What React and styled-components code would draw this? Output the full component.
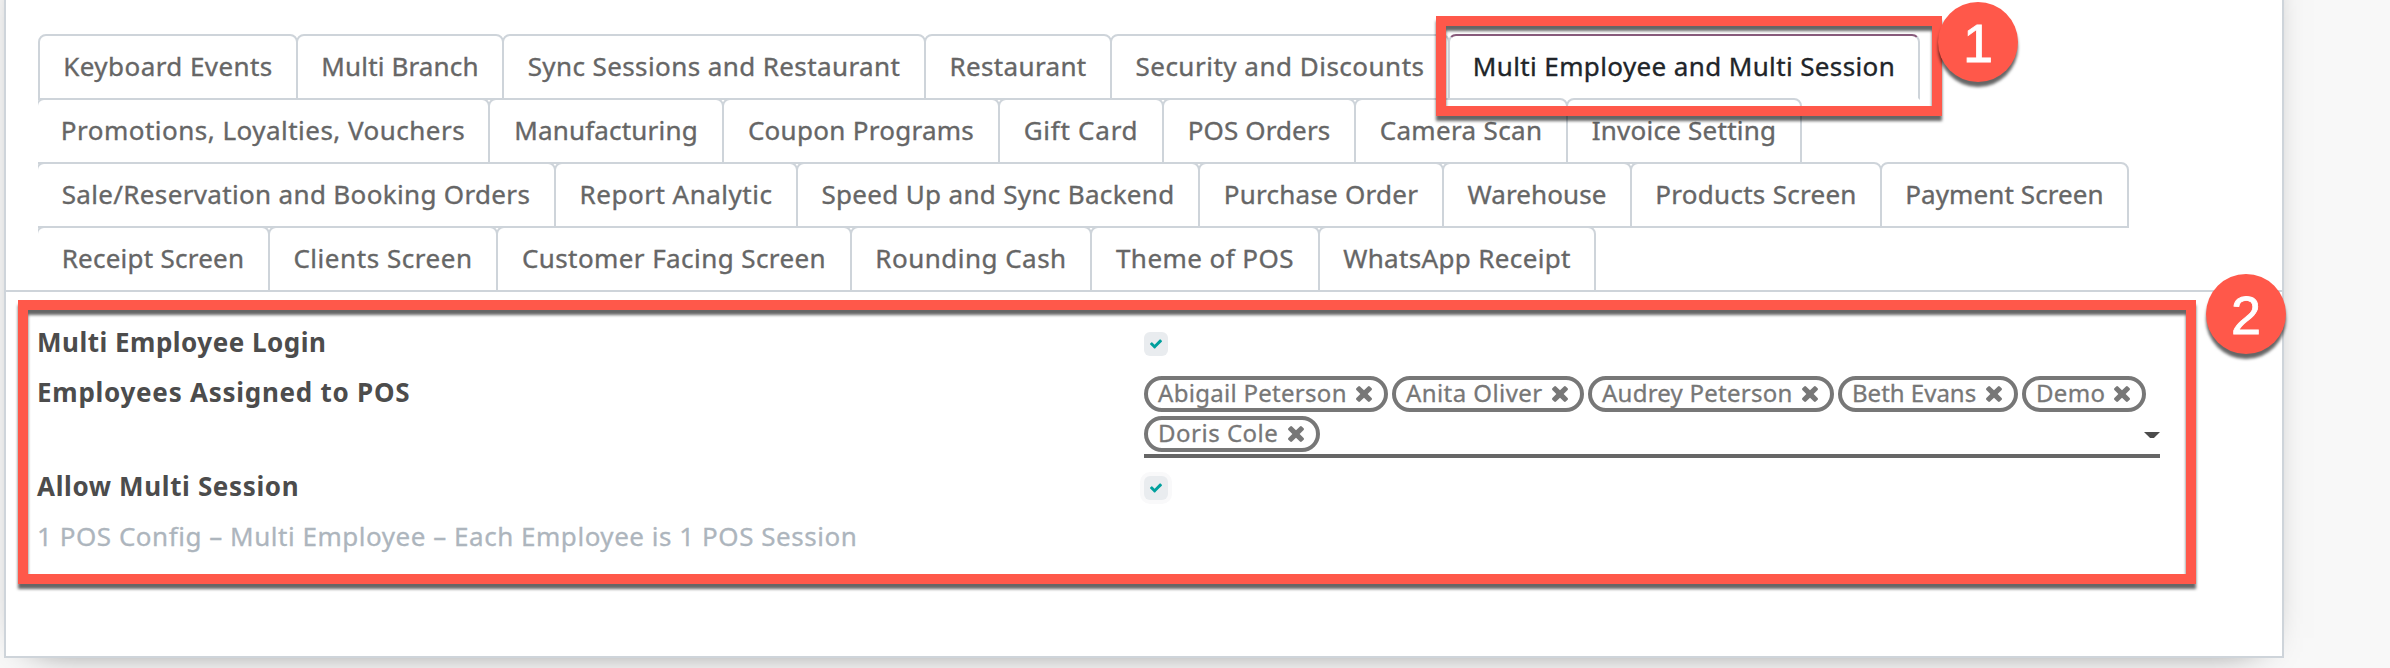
import React from "react";
import styled, { createGlobalStyle } from "styled-components";

const line = "#ced4da";
const accent = "#ff584a";

const GlobalStyle = createGlobalStyle`
  *, *::before, *::after { box-sizing: border-box; }
  body {
    margin: 0;
    background: #f8f8f8;
    font-family: "Noto Sans", "Open Sans", sans-serif;
    font-size: 26px;
    color: #4c4c4c;
  }
`;

const Page = styled.div`
  position: relative;
  height: 668px;
  overflow: hidden;
`;

const Sheet = styled.main`
  width: 2280px;
  height: 718px;
  margin: -60px 0 0 4px;
  padding-top: 94px;
  background: #fff;
  border: 2px solid ${line};
  box-shadow: 0 10px 40px -30px #000;
`;

const TabStrip = styled.nav`
  padding-left: 32px;
  margin-top: -2px;
  border-bottom: 2px solid ${line};
`;

const TabRow = styled.div`
  display: flex;
  height: 64px;
  overflow-x: clip;
  overflow-y: visible;
`;

const Tab = styled.a`
  flex: none;
  width: ${(p) => p.$width}px;
  height: 66px;
  margin-left: ${(p) => (p.$flush ? 0 : -2)}px;
  border: 2px solid ${line};
  border-radius: 8px 8px 0 0;
  border-top-color: ${(p) => (p.$active ? "#875a7b" : line)};
  border-bottom-color: ${(p) => (p.$active ? "#fff" : line)};
  color: ${(p) => (p.$active ? "#212529" : "#666")};
  -webkit-text-stroke: 0.35px currentColor;
  line-height: 60px;
  letter-spacing: ${(p) => p.$tracking}px;
  text-align: center;
  white-space: nowrap;
`;

const Form = styled.section`
  padding: 25px 0 0 31px;
`;

const FormRow = styled.div`
  display: grid;
  grid-template-columns: 1107px 1016px;
  align-items: start;
  min-height: ${(p) => (p.$tall ? 94 : 50)}px;
`;

const Label = styled.label`
  font-weight: 700;
  line-height: 50px;
  letter-spacing: ${(p) => p.$tracking}px;
  white-space: nowrap;
`;

const Help = styled.p`
  margin: 0;
  color: #adb5bd;
  -webkit-text-stroke: 0.3px currentColor;
  line-height: 50px;
  letter-spacing: 0.53px;
  white-space: nowrap;
`;

const CheckBox = styled.span`
  display: flex;
  align-items: center;
  justify-content: center;
  width: 24px;
  height: 24px;
  margin-top: 15px;
  border-radius: 6px;
  background: #e9ecef;
  color: #00a09d;
  box-shadow: ${(p) => (p.$focused ? "0 0 0 4px #f9f9fa" : "none")};
`;

const TagField = styled.div`
  display: flex;
  flex-wrap: wrap;
  gap: 4px;
  height: 82px;
  margin-top: 9px;
  border-bottom: 4px solid #666;
`;

const Tag = styled.span`
  display: flex;
  align-items: center;
  justify-content: space-between;
  width: ${(p) => p.$width}px;
  height: 36px;
  padding: 0 12px 0 10px;
  border: 4px solid #777;
  border-radius: 18px;
  color: #777;
`;

const TagText = styled.span`
  align-self: flex-start;
  height: 26px;
  font-size: 24px;
  line-height: 26px;
  -webkit-text-stroke: 0.3px currentColor;
  letter-spacing: ${(p) => p.$tracking}px;
  white-space: nowrap;
`;

const TagEntry = styled.span`
  display: flex;
  flex: 1;
  align-items: center;
  justify-content: flex-end;
  height: 38px;
`;

const Caret = styled.span`
  width: 16px;
  height: 6px;
  background: #4c4c4c;
  clip-path: polygon(0 0, 100% 0, 62% 100%, 38% 100%);
`;

const Highlight = styled.div`
  position: absolute;
  left: ${(p) => p.$x}px;
  top: ${(p) => p.$y}px;
  width: ${(p) => p.$w}px;
  height: ${(p) => p.$h}px;
  border: 10px solid ${accent};
  filter: drop-shadow(0 5px 1.5px rgba(0, 0, 0, 0.6));
`;

const StepBadge = styled.div`
  position: absolute;
  left: ${(p) => p.$x}px;
  top: ${(p) => p.$y}px;
  width: 80px;
  height: 80px;
  border-radius: 50%;
  background: ${accent};
  color: #fff;
  font: 54px/82px "Liberation Sans", Arial, sans-serif;
  -webkit-text-stroke: 0.8px currentColor;
  text-align: center;
  filter: drop-shadow(0 5px 1.5px rgba(0, 0, 0, 0.6));
`;

const CheckIcon = () => (
  <svg width="12" height="10" viewBox="121 318 1550 1220" fill="currentColor">
    <path d="M1671 566q0 40-28 68l-724 724-136 136q-28 28-68 28t-68-28l-136-136-362-362q-28-28-28-68t28-68l136-136q28-28 68-28t68 28l294 295 656-657q28-28 68-28t68 28l136 136q28 28 28 68z" />
  </svg>
);

const RemoveIcon = () => (
  <svg width="16" height="16" viewBox="302 366 1188 1188" fill="currentColor">
    <path d="M1490 1322q0 40-28 68l-136 136q-28 28-68 28t-68-28l-294-294-294 294q-28 28-68 28t-68-28l-136-136q-28-28-28-68t28-68l294-294-294-294q-28-28-28-68t28-68l136-136q28-28 68-28t68 28l294 294 294-294q28-28 68-28t68 28l136 136q28 28 28 68t-28 68l-294 294 294 294q28 28 28 68z" />
  </svg>
);

const tabRows = [
  [
    ["Keyboard Events", 260, 0.43],
    ["Multi Branch", 208, 0.15],
    ["Sync Sessions and Restaurant", 424, 0.4],
    ["Restaurant", 188, 0.35],
    ["Security and Discounts", 340, 0.5],
    ["Multi Employee and Multi Session", 472, 0.38],
  ],
  [
    ["Promotions, Loyalties, Vouchers", 454, 0.48],
    ["Manufacturing", 236, 0.18],
    ["Coupon Programs", 278, 0.28],
    ["Gift Card", 166, 0.75],
    ["POS Orders", 194, 0.12],
    ["Camera Scan", 214, 0.33],
    ["Invoice Setting", 236, 0.24],
  ],
  [
    ["Sale/Reservation and Booking Orders", 520, 0.34],
    ["Report Analytic", 244, 0.5],
    ["Speed Up and Sync Backend", 404, 0.33],
    ["Purchase Order", 246, 0.25],
    ["Warehouse", 190, 0.12],
    ["Products Screen", 252, 0.28],
    ["Payment Screen", 249, 0.1],
  ],
  [
    ["Receipt Screen", 234, 0.25],
    ["Clients Screen", 230, 0.55],
    ["Customer Facing Screen", 356, 0.42],
    ["Rounding Cash", 242, 0.48],
    ["Theme of POS", 230, 0.45],
    ["WhatsApp Receipt", 278, 0.35],
  ],
];

const activeTab = "Multi Employee and Multi Session";

const employees = [
  ["Abigail Peterson", 244, 0.29],
  ["Anita Oliver", 192, 0.42],
  ["Audrey Peterson", 246, 0.24],
  ["Beth Evans", 180, 0],
  ["Demo", 124, 0.3],
  ["Doris Cole", 176, 0.5],
];

export default function App() {
  return (
    <Page>
      <GlobalStyle />
      <Sheet>
        <TabStrip>
          {tabRows.map((row, r) => (
            <TabRow key={r}>
              {row.map(([name, width, tracking], i) => (
                <Tab
                  key={name}
                  $width={width}
                  $tracking={tracking}
                  $flush={r === 0 && i === 0}
                  $active={name === activeTab}
                >
                  {name}
                </Tab>
              ))}
            </TabRow>
          ))}
        </TabStrip>
        <Form>
          <FormRow>
            <Label $tracking={0.5}>Multi Employee Login</Label>
            <CheckBox>
              <CheckIcon />
            </CheckBox>
          </FormRow>
          <FormRow $tall>
            <Label $tracking={0.74}>Employees Assigned to POS</Label>
            <TagField>
              {employees.map(([name, width, tracking]) => (
                <Tag key={name} $width={width}>
                  <TagText $tracking={tracking}>{name}</TagText>
                  <RemoveIcon />
                </Tag>
              ))}
              <TagEntry>
                <Caret />
              </TagEntry>
            </TagField>
          </FormRow>
          <FormRow>
            <Label $tracking={0.64}>Allow Multi Session</Label>
            <CheckBox $focused>
              <CheckIcon />
            </CheckBox>
          </FormRow>
          <Help>1 POS Config – Multi Employee – Each Employee is 1 POS Session</Help>
        </Form>
      </Sheet>
      <Highlight $x={1436} $y={16} $w={506} $h={100} />
      <StepBadge $x={1938} $y={2}>1</StepBadge>
      <Highlight $x={18} $y={300} $w={2178} $h={284} />
      <StepBadge $x={2206} $y={274}>2</StepBadge>
    </Page>
  );
}
